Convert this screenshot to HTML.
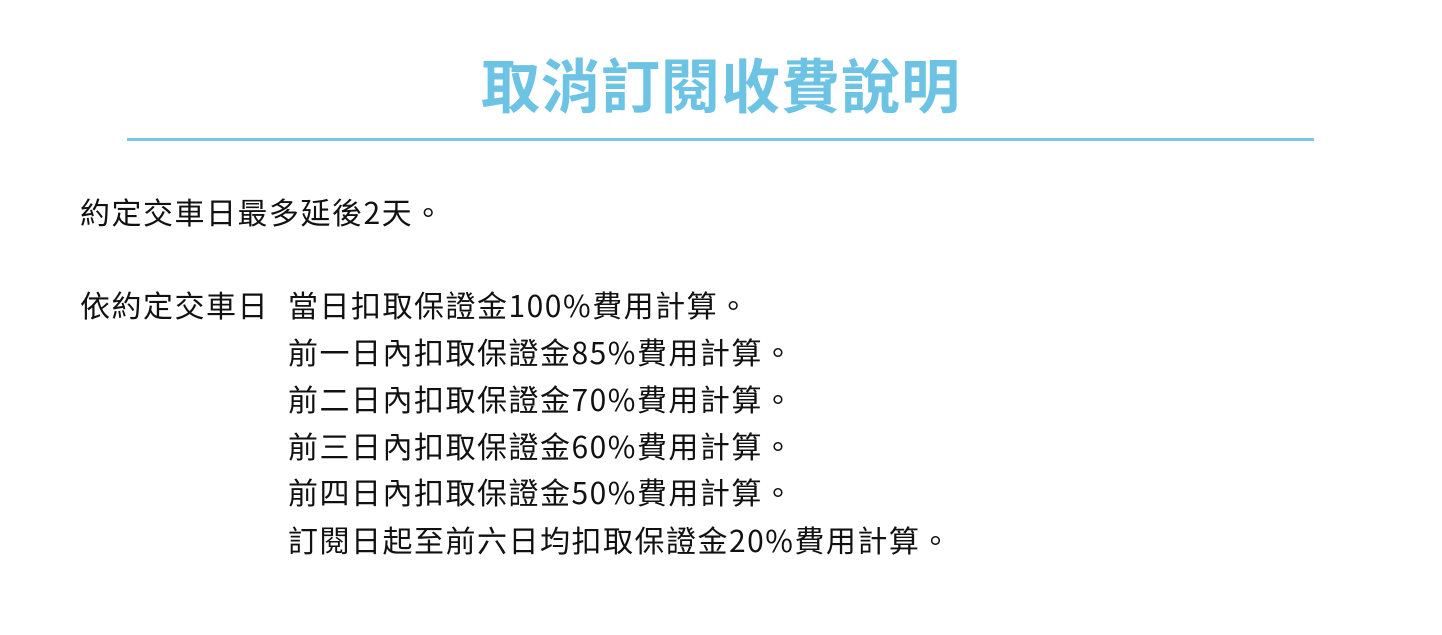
<!DOCTYPE html>
<html><head><meta charset="utf-8"><style>
html,body{margin:0;padding:0;background:#fff;width:1442px;height:635px;overflow:hidden}
body{font-family:"Noto Sans CJK TC","Liberation Sans",sans-serif;color:#111;position:relative}
.t{position:absolute;left:0;width:1442px;top:43px;text-align:center;font-size:59px;font-weight:bold;color:#6cc3e3;line-height:80px;letter-spacing:1px}
.hr{position:absolute;left:127px;width:1187px;top:138px;height:3px;background:#79c6e3}
.l{position:absolute;font-size:30px;line-height:47px;letter-spacing:1.5px;white-space:nowrap}
</style></head><body>
<div class="t">取消訂閱收費說明</div>
<div class="hr"></div>
<div class="l" style="left:80px;top:188px">約定交車日最多延後2天。</div>
<div class="l" style="left:80px;top:281px">依約定交車日</div>
<div class="l" style="left:288px;top:281px">當日扣取保證金100%費用計算。</div>
<div class="l" style="left:288px;top:328px">前一日內扣取保證金85%費用計算。</div>
<div class="l" style="left:288px;top:375px">前二日內扣取保證金70%費用計算。</div>
<div class="l" style="left:288px;top:422px">前三日內扣取保證金60%費用計算。</div>
<div class="l" style="left:288px;top:468px">前四日內扣取保證金50%費用計算。</div>
<div class="l" style="left:288px;top:516px">訂閱日起至前六日均扣取保證金20%費用計算。</div>
</body></html>
